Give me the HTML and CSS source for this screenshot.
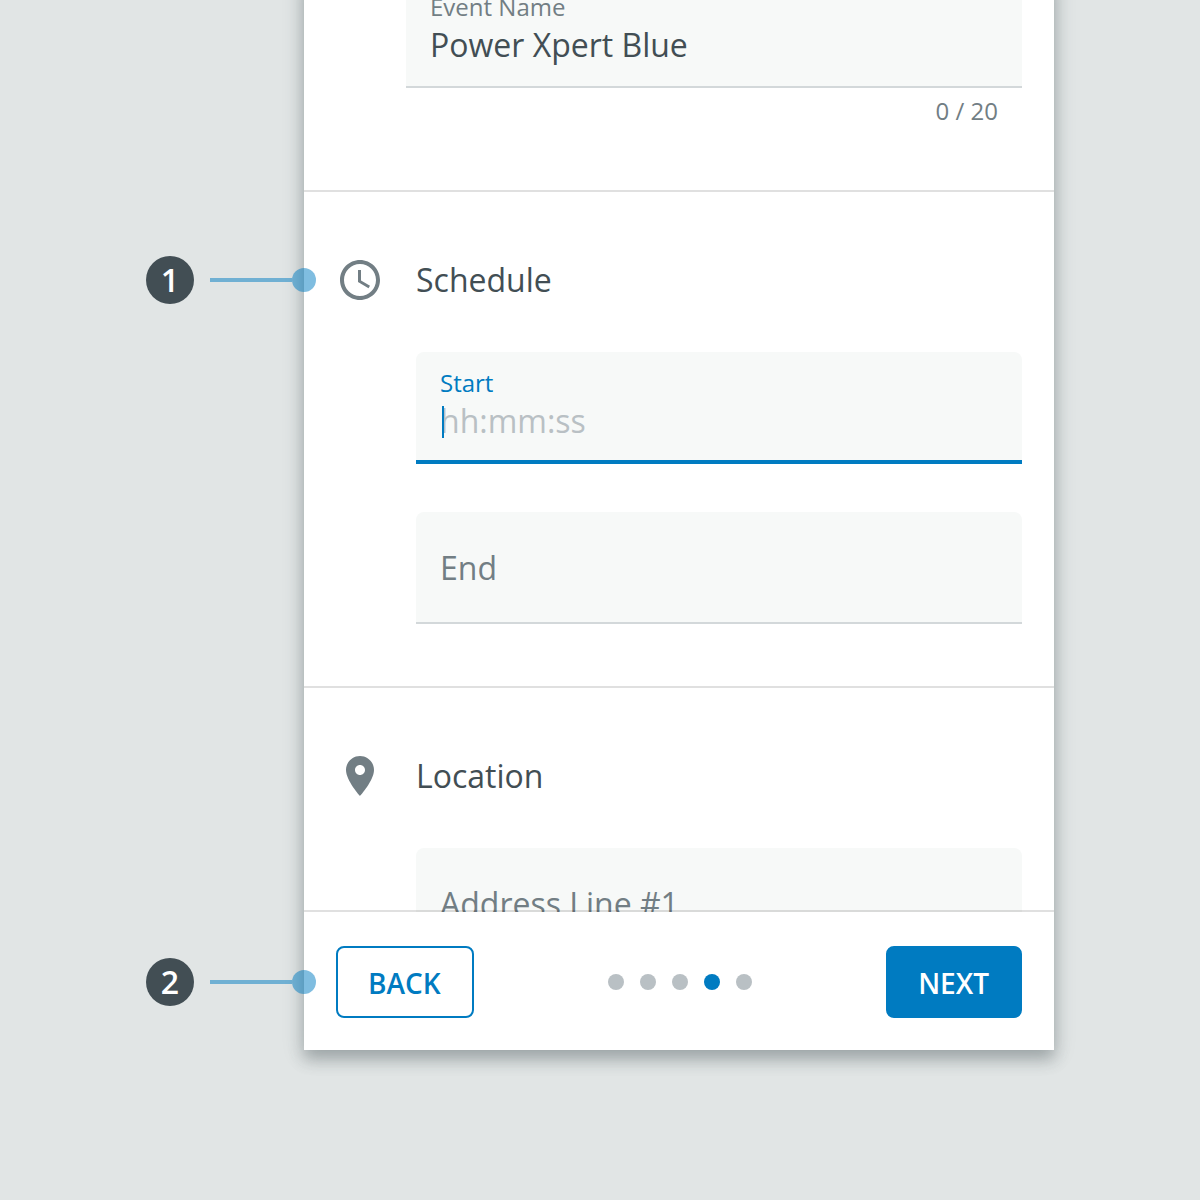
FILE: index.html
```html
<!DOCTYPE html>
<html lang="en">
<head>
<meta charset="utf-8">
<meta name="viewport" content="width=device-width, initial-scale=1">
<title>Create Event</title>
<link rel="stylesheet" href="styles.css">
</head>
<body>
<main class="sheet">
  <form class="form" id="event-form">
    <section class="section section-name">
      <div class="field field-square">
        <label class="field-label" for="event-name">Event Name</label>
        <input class="field-input" id="event-name" type="text" value="Power Xpert Blue">
      </div>
      <p class="counter">0 / 20</p>
    </section>

    <section class="section">
      <header class="section-header">
        <div class="callout">
          <span class="callout-badge">1</span>
          <span class="callout-line"></span>
          <span class="callout-dot"></span>
        </div>
        <svg class="icon" viewBox="0 0 24 24" aria-hidden="true">
          <path d="M11.99 2C6.47 2 2 6.48 2 12s4.47 10 9.99 10C17.52 22 22 17.52 22 12S17.52 2 11.99 2zM12 20c-4.42 0-8-3.58-8-8s3.58-8 8-8 8 3.58 8 8-3.58 8-8 8zm.5-13H11v6l5.25 3.15.75-1.23-4.5-2.67z"/>
        </svg>
        <h2 class="section-title">Schedule</h2>
      </header>
      <div class="fields">
        <div class="field field-focused">
          <label class="field-label" for="start">Start</label>
          <div class="field-entry">
            <input class="field-input" id="start" type="text" placeholder="hh:mm:ss">
            <span class="caret"></span>
          </div>
        </div>
        <div class="field field-empty">
          <input class="field-input" id="end" type="text" placeholder="End" aria-label="End">
        </div>
      </div>
    </section>

    <section class="section">
      <header class="section-header">
        <svg class="icon" viewBox="0 0 24 24" aria-hidden="true">
          <path d="M12 2C8.13 2 5 5.13 5 9c0 5.25 7 13 7 13s7-7.75 7-13c0-3.87-3.13-7-7-7zm0 9.5c-1.38 0-2.5-1.12-2.5-2.5s1.12-2.5 2.5-2.5 2.5 1.12 2.5 2.5-1.12 2.5-2.5 2.5z"/>
        </svg>
        <h2 class="section-title">Location</h2>
      </header>
      <div class="fields">
        <div class="field field-empty">
          <input class="field-input" id="address" type="text" placeholder="Address Line #1" aria-label="Address Line #1">
        </div>
      </div>
    </section>
  </form>

  <footer class="footer">
    <div class="stepper">
      <div class="callout">
        <span class="callout-badge">2</span>
        <span class="callout-line"></span>
        <span class="callout-dot"></span>
      </div>
      <button class="button button-outlined" type="button">BACK</button>
      <ol class="dots" aria-label="Step 4 of 5">
        <li class="dot"></li>
        <li class="dot"></li>
        <li class="dot"></li>
        <li class="dot dot-active"></li>
        <li class="dot"></li>
      </ol>
      <button class="button button-filled" type="button">NEXT</button>
    </div>
  </footer>
</main>
</body>
</html>
```
FILE: styles.css
```css
:root {
  --blue: #007bc1;
  --text: #424e54;
  --muted: #727e84;
  --faint: #b9c0c4;
  --divider: rgba(0, 0, 0, 0.12);
}

*,
*::before,
*::after {
  box-sizing: border-box;
}

body {
  margin: 0;
  overflow: hidden;
  background: #e1e5e5;
  color: var(--text);
  font-family: "Open Sans", "Noto Sans", sans-serif;
  font-size: 32px;
}

/* The sheet is scrolled slightly past the top of the window. */
.sheet {
  display: flex;
  flex-direction: column;
  height: calc(100vh - 126px);
  margin: -24px 146px 150px 304px;
  background: #fff;
  box-shadow: 0 10px 14px rgba(66, 78, 84, 0.3), 0 4px 20px rgba(66, 78, 84, 0.22);
}

.form {
  flex: 1;
  min-height: 0;
  overflow-x: visible;
  overflow-y: clip;
}

.section {
  padding: 64px 32px 62px;
  border-bottom: 2px solid var(--divider);
}

.section-name {
  padding-top: 0;
  padding-left: 102px;
}

.section-header {
  position: relative;
  display: flex;
  align-items: center;
  gap: 32px;
  height: 48px;
}

.section-title {
  margin: 0;
  font-size: 32px;
  font-weight: 400;
  line-height: 48px;
}

.icon {
  width: 48px;
  height: 48px;
  fill: var(--muted);
}

.fields {
  display: flex;
  flex-direction: column;
  gap: 48px;
  padding: 48px 0 0 80px;
}

.field {
  display: flex;
  flex-direction: column;
  height: 112px;
  padding: 16px 24px 0;
  border-bottom: 2px solid #d3d8da;
  border-radius: 8px 8px 0 0;
  background: #f7f9f8;
}

.field-square {
  border-radius: 0;
}

.field-focused {
  border-bottom: 4px solid var(--blue);
}

.field-empty {
  justify-content: center;
  padding-top: 0;
}

.field-label {
  color: var(--muted);
  font-size: 24px;
  line-height: 30px;
}

.field-focused .field-label {
  color: var(--blue);
}

.field-entry {
  position: relative;
}

.field-input {
  display: block;
  width: 100%;
  height: 44px;
  padding: 0;
  border: 0;
  outline: 0;
  background: transparent;
  color: var(--text);
  font: inherit;
}

.field-input::placeholder {
  color: var(--faint);
  opacity: 1;
}

.field-empty .field-input::placeholder {
  color: var(--muted);
}

.caret {
  position: absolute;
  top: 8px;
  left: 2px;
  width: 2px;
  height: 32px;
  background: var(--blue);
}

.counter {
  margin: 0;
  padding: 8px 24px 2px 0;
  color: var(--muted);
  font-size: 24px;
  line-height: 30px;
  text-align: right;
}

/* The top border is translucent and lies over the form's last two pixels. */
.footer {
  position: relative;
  margin-top: -2px;
  padding: 34px 32px 32px;
  border-top: 2px solid var(--divider);
  background: #fff;
  background-clip: padding-box;
}

.stepper {
  position: relative;
  display: flex;
  align-items: center;
  justify-content: space-between;
}

.button {
  height: 72px;
  padding: 2px 31px 0 30px;
  border: 2px solid var(--blue);
  border-radius: 8px;
  font: 600 28px/40px "Open Sans", "Noto Sans", sans-serif;
}

.button-outlined {
  background: #fff;
  color: var(--blue);
}

.button-filled {
  background: var(--blue);
  color: #fff;
}

.dots {
  display: flex;
  gap: 16px;
  margin: 0;
  padding: 0;
  list-style: none;
}

.dot {
  width: 16px;
  height: 16px;
  border-radius: 50%;
  background: var(--faint);
}

.dot-active {
  background: var(--blue);
}

/* Numbered markers that hang off the sheet's left edge. */
.callout {
  position: absolute;
  top: 50%;
  left: -190px;
  display: flex;
  align-items: center;
  width: 170px;
  transform: translateY(-50%);
}

.callout-badge {
  width: 48px;
  height: 48px;
  margin-right: 16px;
  border-radius: 50%;
  background: var(--text);
  color: #fff;
  font-weight: 600;
  line-height: 48px;
  text-align: center;
}

.callout-line {
  flex: 1;
  height: 4px;
  background: rgba(0, 123, 193, 0.5);
}

.callout-dot {
  width: 24px;
  height: 24px;
  border-radius: 50%;
  background: rgba(0, 123, 193, 0.5);
}
```
